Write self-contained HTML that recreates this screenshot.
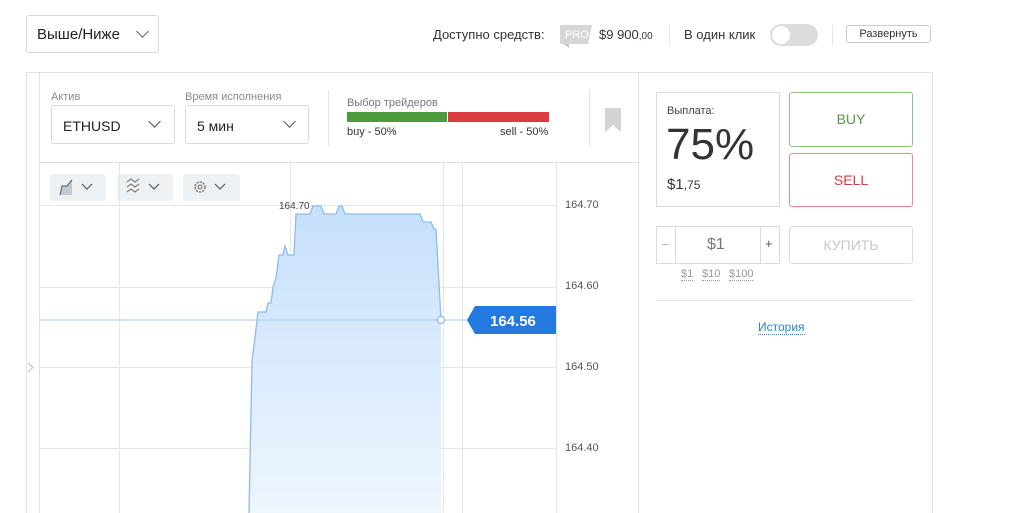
<!DOCTYPE html>
<html><head><meta charset="utf-8"><style>
*{margin:0;padding:0;box-sizing:border-box}
html,body{width:1024px;height:513px;overflow:hidden}
body{background:#fff;font-family:"Liberation Sans",sans-serif;color:#333;position:relative}
.a{position:absolute}
.sel{position:absolute;border:1px solid #dadada;border-radius:3px;background:#fff}
.chev{position:absolute;width:9px;height:9px;border-right:1.2px solid #555;border-bottom:1.2px solid #555;transform:rotate(45deg)}
.lbl{position:absolute;font-size:11px;color:#8a8a8a}
.tb{position:absolute;top:174px;height:27px;background:#eef1f4;border-radius:3px}
.ax{position:absolute;left:565px;font-size:11px;color:#555}
</style></head><body>
<div class="sel" style="left:26px;top:15px;width:133px;height:38px"><span class="a" style="left:10px;top:10px;font-size:15px;color:#222">Выше/Ниже</span><div class="chev" style="left:111px;top:11px;border-color:#666"></div></div>
<span class="a" style="left:433px;top:27px;font-size:13px;color:#333">Доступно средств:</span>
<div class="a" style="left:560px;top:25px;width:32px;height:19px;background:#d6d6d6;clip-path:polygon(0 0,100% 0,88% 100%,0 100%);color:#fff;font-size:11px;padding:4px 0 0 5px">PRO</div>
<div class="a" style="left:563px;top:44px;width:0;height:0;border-top:4px solid #c8c8c8;border-left:6px solid transparent"></div>
<span class="a" style="left:599px;top:27px;font-size:13px;color:#333">$9 900<span style="font-size:10px">,00</span></span>
<div class="a" style="left:669px;top:25px;width:1px;height:20px;background:#e5e5e5"></div>
<span class="a" style="left:684px;top:27px;font-size:13px;color:#333">В один клик</span>
<div class="a" style="left:770px;top:24px;width:48px;height:22px;border-radius:11px;background:#dcdcdc"><div class="a" style="left:2px;top:2px;width:18px;height:18px;border-radius:50%;background:#fff"></div></div>
<div class="a" style="left:832px;top:25px;width:1px;height:20px;background:#e5e5e5"></div>
<div class="a" style="left:846px;top:25px;width:85px;height:18px;border:1px solid #ccc;border-radius:3px;font-size:11px;color:#333;text-align:center;line-height:16px">Развернуть</div>

<div class="a" style="left:26px;top:72px;width:907px;height:441px;border:1px solid #e2e2e2;border-bottom:none"></div>
<div class="a" style="left:39px;top:72px;width:1px;height:441px;background:#e2e2e2"></div>
<div class="a" style="left:638px;top:72px;width:1px;height:441px;background:#e2e2e2"></div>
<div class="a" style="left:39px;top:162px;width:599px;height:1px;background:#e2e2e2"></div>
<div class="chev" style="left:25px;top:364px;width:7px;height:7px;transform:rotate(-45deg);border-color:#bbb;border-width:1px"></div>

<span class="lbl" style="left:51px;top:91px">Актив</span>
<div class="sel" style="left:51px;top:105px;width:124px;height:39px"><span class="a" style="left:11px;top:12px;font-size:14px;color:#222">ETHUSD</span><div class="chev" style="left:98px;top:11px"></div></div>
<span class="lbl" style="left:185px;top:91px">Время исполнения</span>
<div class="sel" style="left:185px;top:105px;width:124px;height:39px"><span class="a" style="left:11px;top:12px;font-size:14px;color:#222">5 мин</span><div class="chev" style="left:99px;top:11px"></div></div>
<div class="a" style="left:328px;top:90px;width:1px;height:56px;background:#e2e2e2"></div>
<span class="lbl" style="left:347px;top:97px;color:#777">Выбор трейдеров</span>
<div class="a" style="left:347px;top:112px;width:100px;height:10px;background:#4a9d3a"></div>
<div class="a" style="left:448px;top:112px;width:101px;height:10px;background:#dc3b42"></div>
<span class="a" style="left:347px;top:126px;font-size:11px;color:#333">buy - 50%</span>
<span class="a" style="left:500px;top:126px;font-size:11px;color:#333">sell - 50%</span>
<div class="a" style="left:589px;top:90px;width:1px;height:56px;background:#e2e2e2"></div>
<div class="a" style="left:605px;top:108px;width:16px;height:24px;background:#d4d4d4;clip-path:polygon(0 0,100% 0,100% 100%,50% 72%,0 100%)"></div>

<div class="tb" style="left:50px;width:56px"></div>
<div class="tb" style="left:117px;width:56px"></div>
<div class="tb" style="left:183px;width:57px"></div>

<svg class="a" style="left:0;top:0" width="1024" height="513">
<defs><linearGradient id="g" x1="0" y1="0" x2="0" y2="1"><stop offset="0" stop-color="#c6e0fb"/><stop offset="1" stop-color="#eef6fe"/></linearGradient></defs>
<g stroke="#e6e6e6" stroke-width="1">
<line x1="40" y1="205.5" x2="556" y2="205.5"/><line x1="40" y1="287.5" x2="556" y2="287.5"/><line x1="40" y1="367.5" x2="556" y2="367.5"/><line x1="40" y1="448.5" x2="556" y2="448.5"/>
<line x1="119.5" y1="163" x2="119.5" y2="513"/><line x1="290.5" y1="163" x2="290.5" y2="513"/><line x1="443.5" y1="163" x2="443.5" y2="513"/><line x1="462.5" y1="163" x2="462.5" y2="513"/><line x1="556.5" y1="163" x2="556.5" y2="513"/>
</g>
<path d="M249 513 L252 362 L258 312 L266 312 L268 303 L271 303 L273 287 L276 278 L279 255 L283 255 L285 246 L288 255 L294 255 L296 214 L310 214 L313 206 L321 206 L324 214 L336 214 L339 206 L342 206 L345 214 L420 214 L423 222 L431 222 L434 229 L436 229 L441 320 L441 513 Z" fill="url(#g)"/>
<path d="M249 513 L252 362 L258 312 L266 312 L268 303 L271 303 L273 287 L276 278 L279 255 L283 255 L285 246 L288 255 L294 255 L296 214 L310 214 L313 206 L321 206 L324 214 L336 214 L339 206 L342 206 L345 214 L420 214 L423 222 L431 222 L434 229 L436 229 L441 320" fill="none" stroke="#8dbbef" stroke-width="1.3"/>
<line x1="40" y1="320" x2="467" y2="320" stroke="#a9c9f0" stroke-width="1"/>
<circle cx="441" cy="320" r="3.5" fill="#fff" stroke="#8dbbef" stroke-width="1.3"/>
<path d="M467 320 L475 306 L556 306 L556 334 L475 334 Z" fill="#2379e0"/>
<text x="490" y="326" font-family="Liberation Sans" font-weight="bold" font-size="15" fill="#fff">164.56</text>
<text x="279" y="209" font-family="Liberation Sans" font-size="10" fill="#444">164.70</text>
<path d="M60 195 L62 186 L67 186 L72 180 L72 195 Z" fill="#c3c9d0"/><path d="M60 195 L62 186 L67 186 L72 180" fill="none" stroke="#555" stroke-width="1"/>
<path d="M82 184 L87 189 L92 184" fill="none" stroke="#555" stroke-width="1.2"/>
<path d="M127 182 L131 179 L135 182 L139 179 M127 187 L131 184 L135 187 L139 184 M127 192 L131 189 L135 192 L139 189" fill="none" stroke="#666" stroke-width="1"/>
<path d="M149 184 L154 189 L159 184" fill="none" stroke="#555" stroke-width="1.2"/>
<circle cx="200" cy="187" r="5" fill="none" stroke="#666" stroke-width="1.3" stroke-dasharray="2.2 1.1"/><circle cx="200" cy="187" r="2" fill="none" stroke="#666" stroke-width="1"/>
<path d="M215 184 L220 189 L225 184" fill="none" stroke="#555" stroke-width="1.2"/>
</svg>
<span class="ax" style="top:199px">164.70</span>
<span class="ax" style="top:280px">164.60</span>
<span class="ax" style="top:361px">164.50</span>
<span class="ax" style="top:442px">164.40</span>

<div class="a" style="left:656px;top:92px;width:124px;height:115px;border:1px solid #dcdcdc"></div>
<span class="a" style="left:667px;top:105px;font-size:11px;color:#444">Выплата:</span>
<span class="a" style="left:666px;top:120px;font-size:44px;color:#333;line-height:50px">75%</span>
<span class="a" style="left:667px;top:176px;font-size:15px;color:#333">$1<span style="font-size:12px">,75</span></span>
<div class="a" style="left:789px;top:92px;width:124px;height:55px;border:1px solid #8cc47e;border-radius:3px;color:#4a9d3a;font-size:14px;text-align:center;line-height:53px">BUY</div>
<div class="a" style="left:789px;top:153px;width:124px;height:54px;border:1px solid #e88a8e;border-radius:3px;color:#dc3b42;font-size:14px;text-align:center;line-height:52px">SELL</div>
<div class="a" style="left:656px;top:226px;width:124px;height:38px;border:1px solid #dcdcdc"></div>
<div class="a" style="left:675px;top:226px;width:1px;height:38px;background:#dcdcdc"></div>
<div class="a" style="left:760px;top:226px;width:1px;height:38px;background:#dcdcdc"></div>
<span class="a" style="left:662px;top:236px;font-size:13px;color:#bbb">–</span>
<span class="a" style="left:707px;top:236px;font-size:16px;color:#777">$1</span>
<span class="a" style="left:765px;top:236px;font-size:13px;color:#555">+</span>
<div class="a" style="left:789px;top:226px;width:124px;height:38px;border:1px solid #dcdcdc;border-radius:3px;color:#c8c8c8;font-size:14px;text-align:center;line-height:36px">КУПИТЬ</div>
<span class="a" style="left:681px;top:268px;font-size:11px;color:#999;border-bottom:1px dotted #999">$1</span>
<span class="a" style="left:702px;top:268px;font-size:11px;color:#999;border-bottom:1px dotted #999">$10</span>
<span class="a" style="left:729px;top:268px;font-size:11px;color:#999;border-bottom:1px dotted #999">$100</span>
<div class="a" style="left:656px;top:300px;width:257px;height:1px;background:#e2e2e2"></div>
<span class="a" style="left:758px;top:320px;font-size:12px;color:#2f7fdc;border-bottom:1px dotted #2f7fdc">История</span>
</body></html>
